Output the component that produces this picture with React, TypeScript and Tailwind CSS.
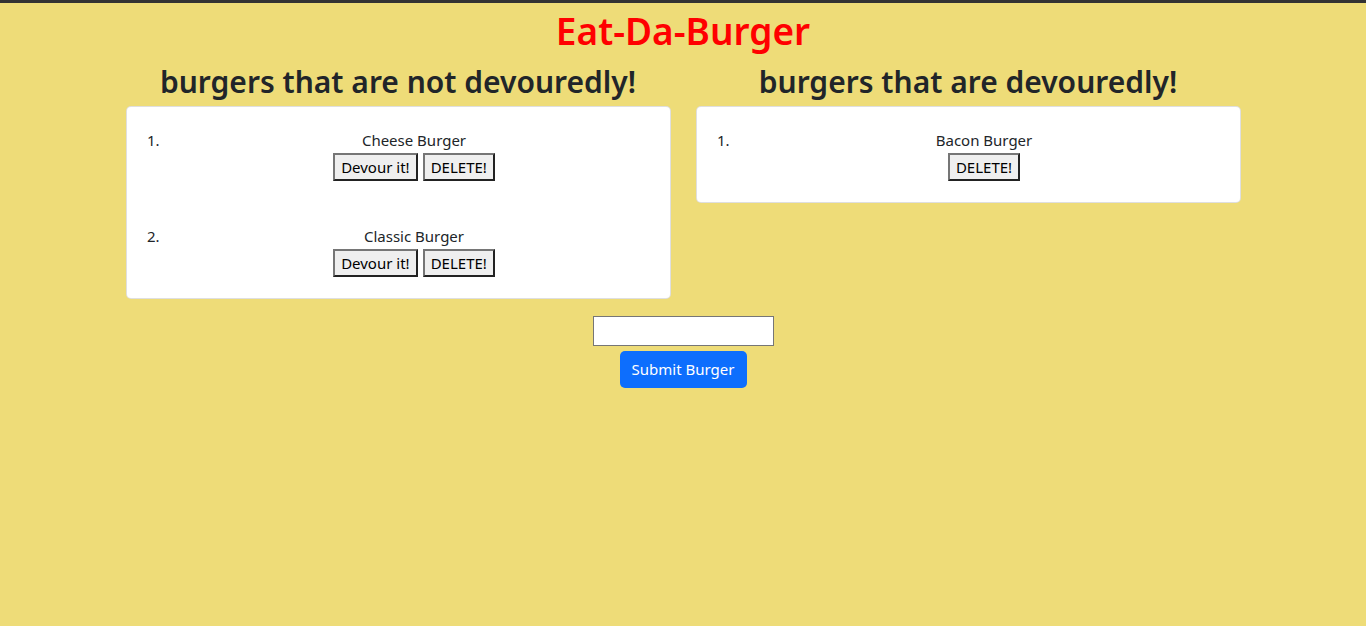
const notDevoured = ["Cheese Burger", "Classic Burger"];
const devoured = ["Bacon Burger"];

function OldButton({ label }: { label: string }) {
  return (
    <button className="h-[28px] px-[6px] bg-[#efefef] text-black text-[15px] leading-none border-2 border-t-[#767676] border-l-[#767676] border-r-[#222] border-b-[#222]">
      {label}
    </button>
  );
}

function BurgerCard({ items, canEat }: { items: string[]; canEat: boolean }) {
  return (
    <div className="bg-white border border-black/[.125] rounded-[5px] px-4 pt-[21px] pb-[21px]">
      <ol className="list-decimal pl-8 space-y-[43px]">
        {items.map((name) => (
          <li key={name} className="-ml-[11px] pl-[11px]">
            <div className="text-center leading-6">{name}</div>
            <div className="flex justify-center gap-[5px] mt-px">
              {canEat && <OldButton label="Devour it!" />}
              <OldButton label="DELETE!" />
            </div>
          </li>
        ))}
      </ol>
    </div>
  );
}

export default function App() {
  return (
    <div
      className="min-h-screen bg-[#eedc78] border-t-[3px] border-[#333] text-[#212529] text-[15px]"
      style={{ fontFamily: '"Noto Sans", "Open Sans", sans-serif' }}
    >
      <h1 className="text-center text-[#ff0000] text-[37px] leading-[48px] font-semibold mt-1 mb-2">
        Eat-Da-Burger
      </h1>
      <div className="flex justify-center gap-[25px]">
        <div className="w-[545px]">
          <h2 className="text-center text-[30px] leading-[38px] font-semibold mb-[5px]">
            burgers that are not devouredly!
          </h2>
          <BurgerCard items={notDevoured} canEat />
        </div>
        <div className="w-[545px]">
          <h2 className="text-center text-[30px] leading-[38px] font-semibold mb-[5px]">
            burgers that are devouredly!
          </h2>
          <BurgerCard items={devoured} canEat={false} />
        </div>
      </div>
      <div className="flex flex-col items-center mt-[17px] gap-[5px]">
        <input type="text" className="w-[181px] h-[30px] bg-white border border-[#767676] px-1" />
        <button className="w-[127px] h-[37px] rounded-[5px] bg-[#0d6efd] text-white text-[15px]">
          Submit Burger
        </button>
      </div>
    </div>
  );
}
